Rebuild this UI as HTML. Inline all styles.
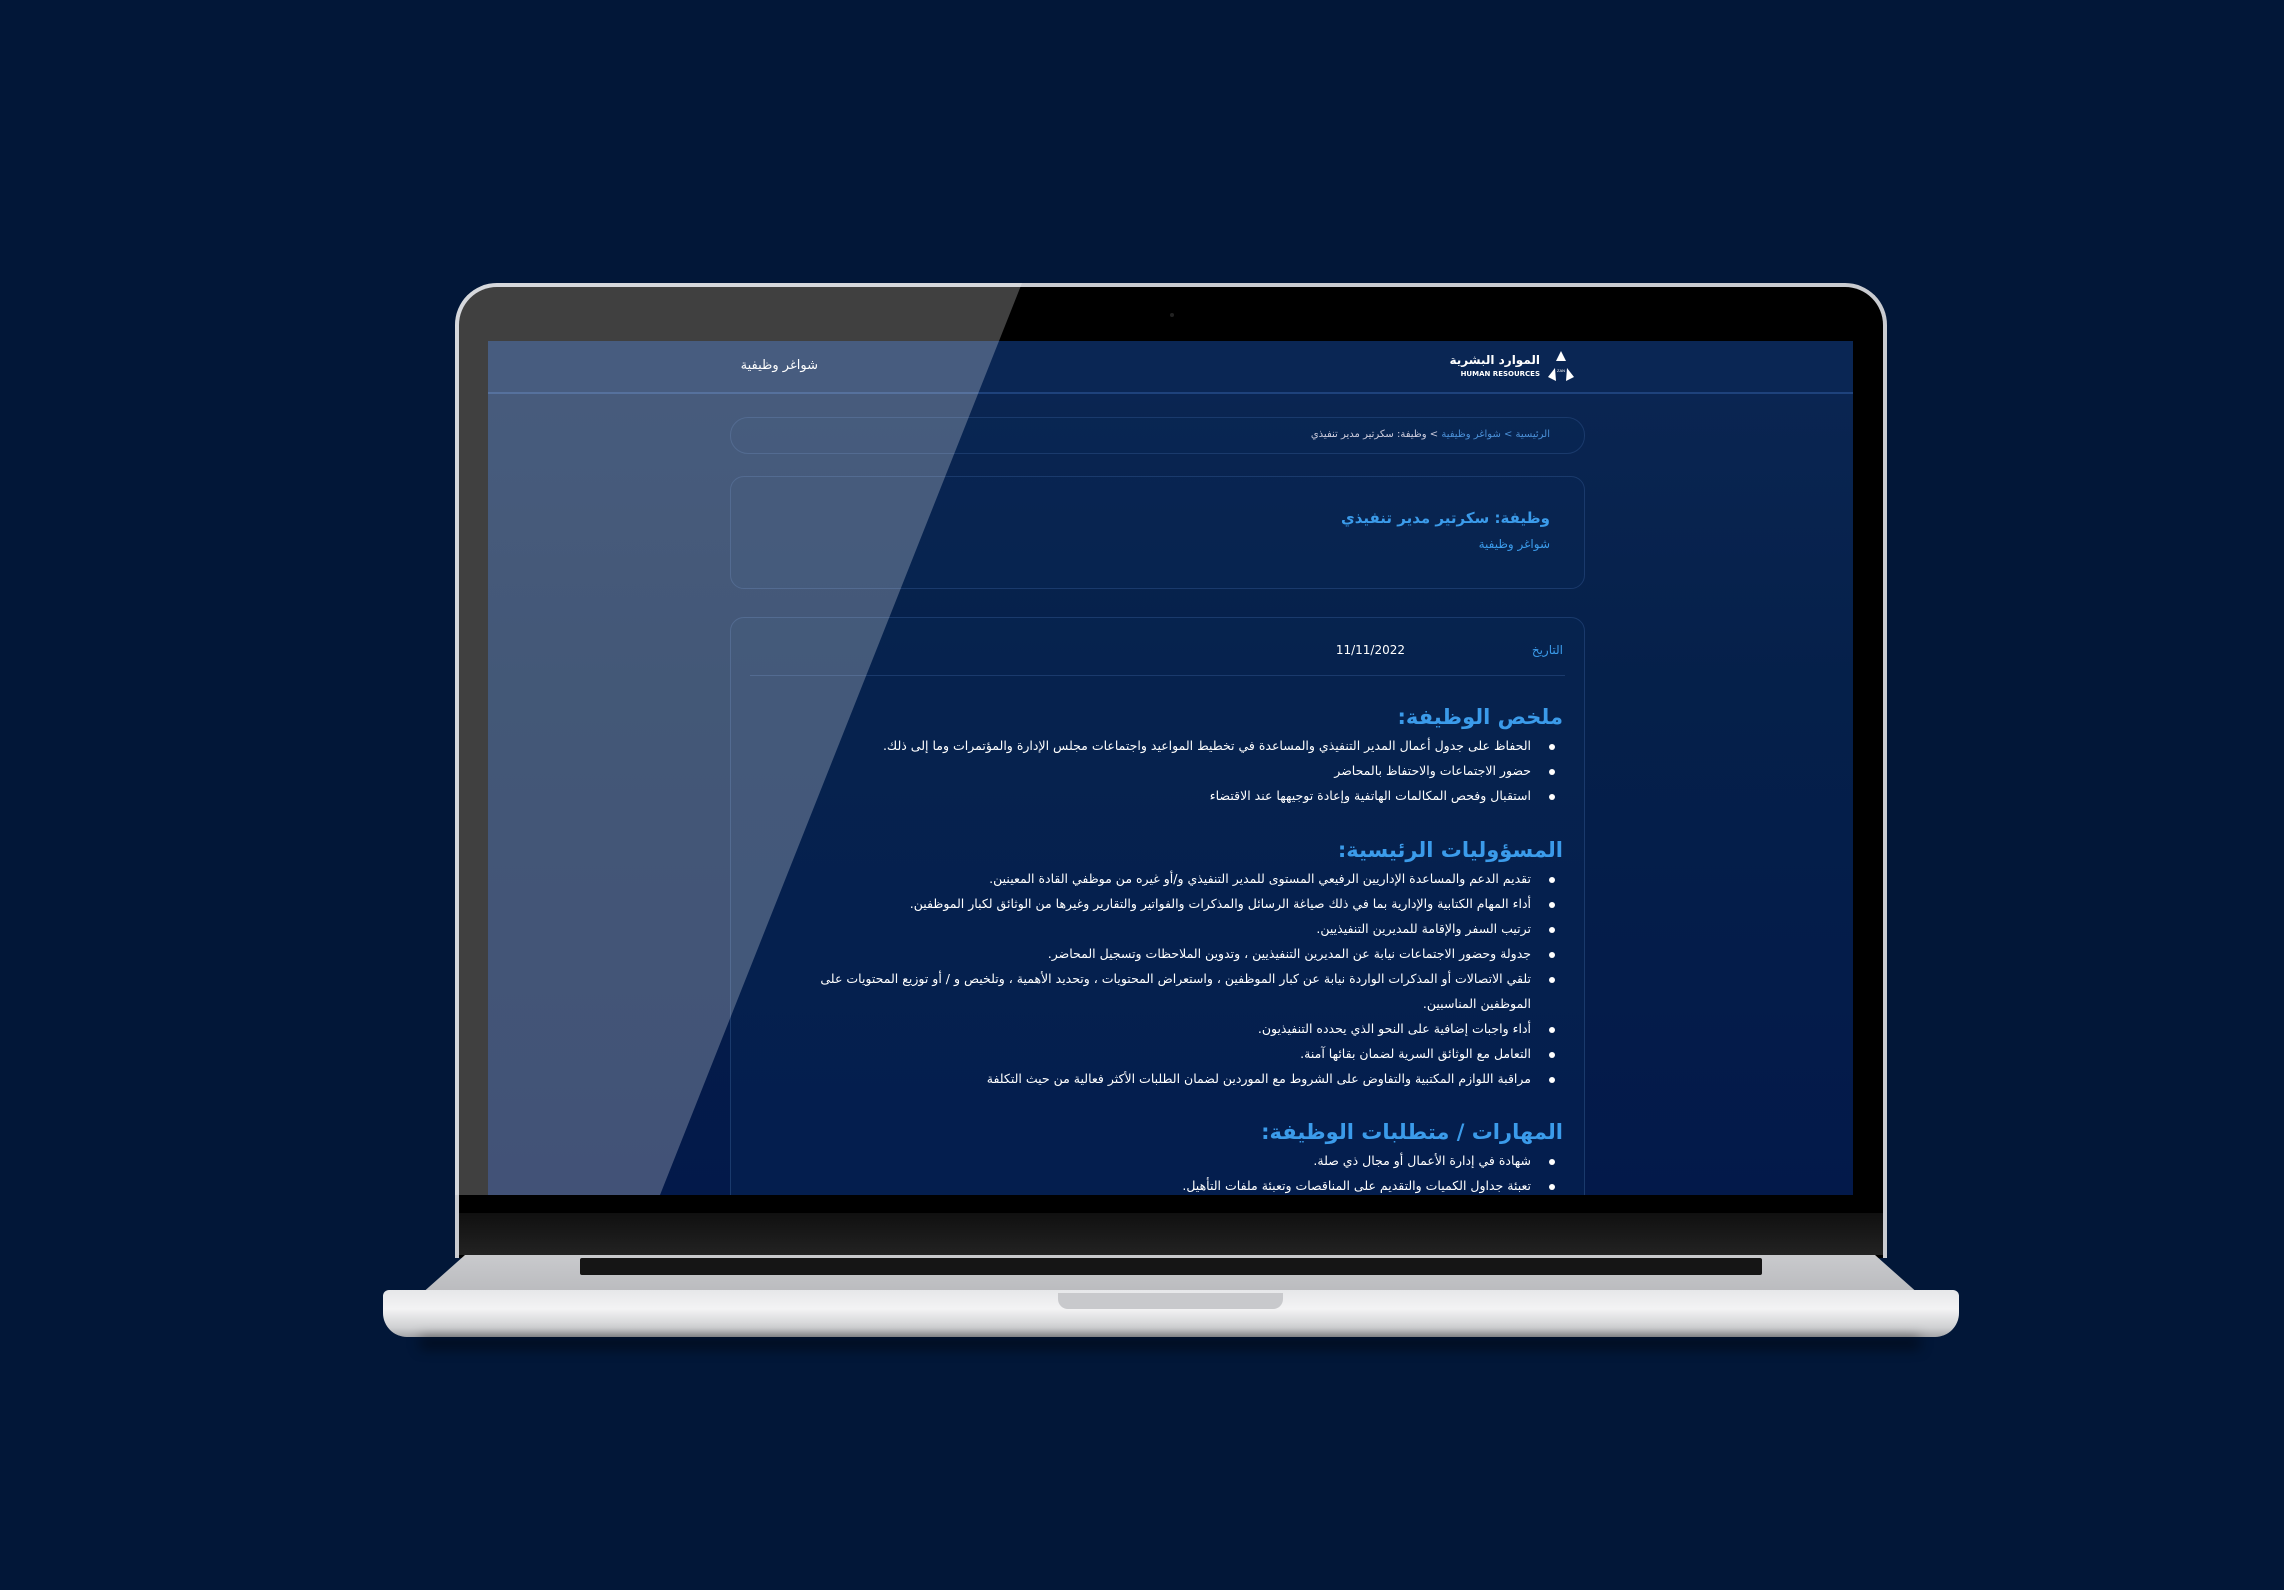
<!DOCTYPE html>
<html><head><meta charset="utf-8">
<style>
*{margin:0;padding:0;box-sizing:border-box}
body{width:2284px;height:1590px;background:#021738;position:relative;overflow:hidden;font-family:"DejaVu Sans","Liberation Sans",sans-serif}
.abs{position:absolute}
.lid{left:455px;top:283px;width:1432px;height:975px;background:#000;border:4px solid #c9cbd0;border-bottom:none;border-radius:42px 42px 0 0}
.screen{left:488px;top:341px;width:1365px;height:854px;background:linear-gradient(180deg,#0b2653 0%,#05204a 40%,#03194a 100%);overflow:hidden}
.nav{left:0;top:0;width:1365px;height:53px;border-bottom:2px solid #1e427c;background:#0a2654}
.t{position:absolute;direction:rtl;white-space:nowrap;color:#fff}
.card{position:absolute;border:1px solid #1a3a6c;border-radius:14px;background:rgba(10,40,85,0.35)}
.b{font-size:12.5px;color:#fff}
.b::after{content:"";position:absolute;right:-24px;top:6px;width:6px;height:6px;border-radius:50%;background:#fff}
.h{color:#3b9bea;font-weight:bold;font-size:21px}
.refl{left:455px;top:283px;width:1432px;height:930px;background:rgba(255,255,255,0.25);clip-path:polygon(0 0,567px 0,205px 912px,0 912px);border-radius:42px 0 0 0}
</style></head><body>
<div class="abs lid"></div>
<div class="abs" style="left:1170px;top:313px;width:4px;height:4px;border-radius:50%;background:#222"></div>
<div class="abs screen">
 <div class="abs nav"></div>
 <div class="t" style="right:1035px;top:17px;font-size:13px">شواغر وظيفية</div>
 <div class="t" style="right:313px;top:12px;font-size:12px;font-weight:bold">الموارد البشرية</div>
 <div class="t" style="right:313px;top:29px;font-size:7px;font-weight:bold;direction:ltr">HUMAN RESOURCES</div>
 <svg class="abs" style="left:1059px;top:10px" width="28" height="32" viewBox="0 0 28 32"><path d="M14 0 L19 10 L9 10Z M1 26 L8 17 L9 30Z M27 26 L20 17 L19 30Z" fill="#fff"/><text x="14" y="21" font-size="4" fill="#fff" text-anchor="middle" font-family="Liberation Sans">ZAN</text></svg>
 <div class="card" style="left:242px;top:76px;width:855px;height:37px;border-radius:18px"></div>
 <div class="t" style="right:303px;top:88px;font-size:10px;color:#ccd"><span style="color:#4a8fd6">الرئيسية &gt; شواغر وظيفية</span> &gt; وظيفة: سكرتير مدير تنفيذي</div>
 <div class="card" style="left:242px;top:135px;width:855px;height:113px"></div>
 <div class="t" style="right:303px;top:168px;font-size:15px;font-weight:bold;color:#3b9bea">وظيفة: سكرتير مدير تنفيذي</div>
 <div class="t" style="right:303px;top:196px;font-size:12px;color:#3b9bea">شواغر وظيفية</div>
 <div class="card" style="left:242px;top:276px;width:855px;height:620px"></div>
 <div class="t" style="right:290px;top:302px;font-size:12px;color:#3b9bea">التاريخ</div>
 <div class="t" style="right:448px;top:302px;font-size:12px">11/11/2022</div>
 <div class="abs" style="left:262px;top:334px;width:815px;height:1px;background:#1a3a6c"></div>
 <div class="t h" style="right:290px;top:364px">ملخص الوظيفة:</div>
 <div class="t b" style="right:322px;top:397px">الحفاظ على جدول أعمال المدير التنفيذي والمساعدة في تخطيط المواعيد واجتماعات مجلس الإدارة والمؤتمرات وما إلى ذلك.</div>
 <div class="t b" style="right:322px;top:422px">حضور الاجتماعات والاحتفاظ بالمحاضر</div>
 <div class="t b" style="right:322px;top:447px">استقبال وفحص المكالمات الهاتفية وإعادة توجيهها عند الاقتضاء</div>
 <div class="t h" style="right:290px;top:497px">المسؤوليات الرئيسية:</div>
 <div class="t b" style="right:322px;top:530px">تقديم الدعم والمساعدة الإداريين الرفيعي المستوى للمدير التنفيذي و/أو غيره من موظفي القادة المعينين.</div>
 <div class="t b" style="right:322px;top:555px">أداء المهام الكتابية والإدارية بما في ذلك صياغة الرسائل والمذكرات والفواتير والتقارير وغيرها من الوثائق لكبار الموظفين.</div>
 <div class="t b" style="right:322px;top:580px">ترتيب السفر والإقامة للمديرين التنفيذيين.</div>
 <div class="t b" style="right:322px;top:605px">جدولة وحضور الاجتماعات نيابة عن المديرين التنفيذيين ، وتدوين الملاحظات وتسجيل المحاضر.</div>
 <div class="t b" style="right:322px;top:630px">تلقي الاتصالات أو المذكرات الواردة نيابة عن كبار الموظفين ، واستعراض المحتويات ، وتحديد الأهمية ، وتلخيص و / أو توزيع المحتويات على</div>
 <div class="t" style="right:322px;top:655px;font-size:12.5px">الموظفين المناسبين.</div>
 <div class="t b" style="right:322px;top:680px">أداء واجبات إضافية على النحو الذي يحدده التنفيذيون.</div>
 <div class="t b" style="right:322px;top:705px">التعامل مع الوثائق السرية لضمان بقائها آمنة.</div>
 <div class="t b" style="right:322px;top:730px">مراقبة اللوازم المكتبية والتفاوض على الشروط مع الموردين لضمان الطلبات الأكثر فعالية من حيث التكلفة</div>
 <div class="t h" style="right:290px;top:779px">المهارات / متطلبات الوظيفة:</div>
 <div class="t b" style="right:322px;top:812px">شهادة في إدارة الأعمال أو مجال ذي صلة.</div>
 <div class="t b" style="right:322px;top:837px">تعبئة جداول الكميات والتقديم على المناقصات وتعبئة ملفات التأهيل.</div>
</div>
<div class="abs" style="left:459px;top:1213px;width:1424px;height:42px;background:linear-gradient(#101010,#222)"></div>
<div class="abs refl"></div>
<div class="abs" style="left:420px;top:1255px;width:1500px;height:40px;background:linear-gradient(#c9cacd,#b9babd);clip-path:polygon(3% 0,97% 0,100% 100%,0 100%)"></div>
<div class="abs" style="left:580px;top:1258px;width:1182px;height:17px;background:#151515;border-radius:2px"></div>
<div class="abs" style="left:383px;top:1290px;width:1576px;height:47px;border-radius:6px 6px 24px 24px;background:linear-gradient(#e6e7e9 0%,#f3f3f4 40%,#cfd0d2 80%,#a5a6a9 100%)"></div>
<div class="abs" style="left:1058px;top:1293px;width:225px;height:16px;border-radius:0 0 10px 10px;background:#c8c9cc"></div>
<div class="abs" style="left:420px;top:1337px;width:1500px;height:12px;background:rgba(0,0,0,0.45);filter:blur(6px)"></div>
</body></html>
